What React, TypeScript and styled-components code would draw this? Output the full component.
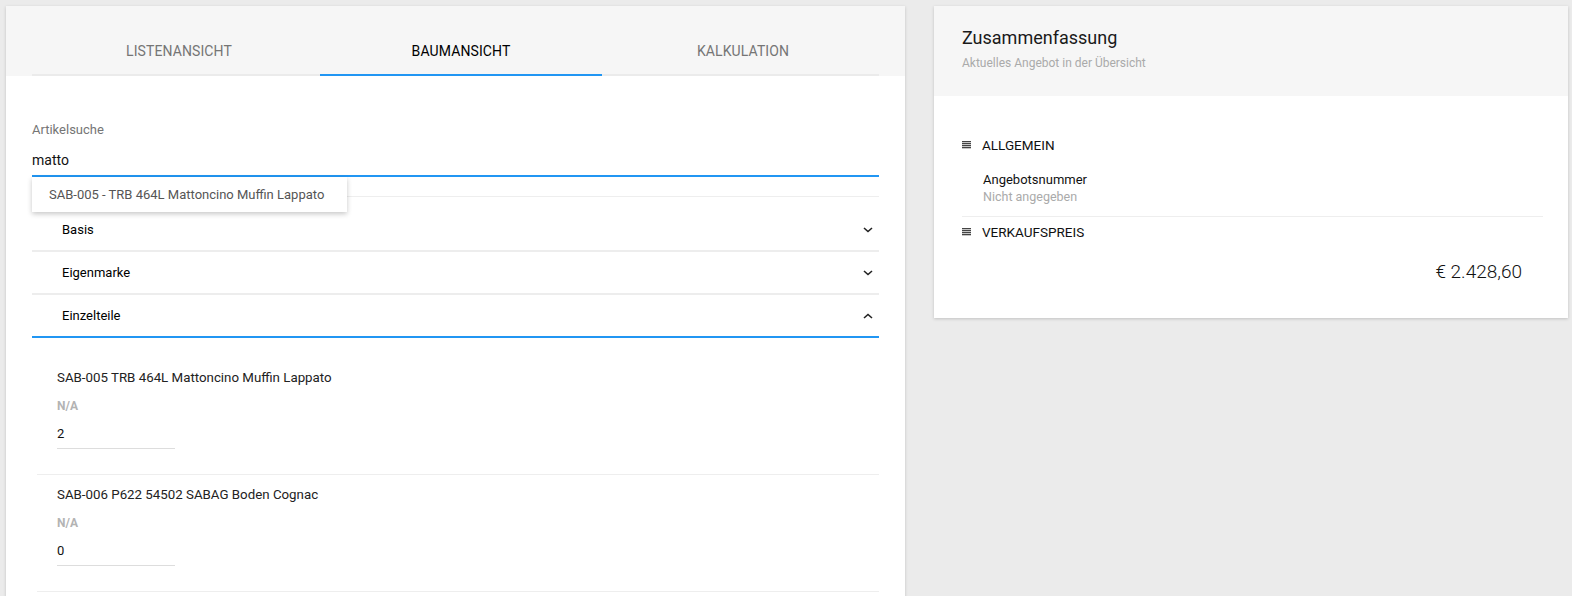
import React from 'react';
import styled, { createGlobalStyle } from 'styled-components';

const GlobalStyle = createGlobalStyle`
  html, body {
    margin: 0;
    padding: 0;
    background: #ebebeb;
    font-family: Roboto, "Noto Sans", "Liberation Sans", sans-serif;
    color: #212121;
    overflow: hidden;
  }
`;

const Page = styled.div`
  display: flex;
  align-items: flex-start;
  gap: 29px;
  padding: 6px 4px 0 6px;
  height: 590px;
`;

const Card = styled.div`
  background: #fff;
  box-shadow: 0 1px 3px rgba(0, 0, 0, 0.18);
`;

const LeftCard = styled(Card)`
  width: 899px;
  min-height: 640px;
`;

const RightCard = styled(Card)`
  flex: 1;
`;

const TabHeader = styled.div`
  background: #f6f6f6;
  padding: 22px 26px 0;
`;

const TabBar = styled.div`
  display: flex;
  padding-left: 6px;
  border-bottom: 2px solid #ebebeb;
  height: 46px;
`;

const Tab = styled.div<{ $active?: boolean }>`
  width: 282px;
  flex: none;
  display: flex;
  align-items: center;
  justify-content: center;
  font-size: 14px;
  font-weight: 400;
  letter-spacing: 0.1px;
  color: ${(p) => (p.$active ? '#000' : '#757575')};
  position: relative;

  &::after {
    content: '';
    display: ${(p) => (p.$active ? 'block' : 'none')};
    position: absolute;
    left: 0;
    right: 0;
    bottom: -2px;
    height: 2px;
    background: #2196f3;
  }
`;

const Body = styled.div`
  padding: 46px 26px 0;
`;

const SearchField = styled.div`
  position: relative;
`;

const FieldLabel = styled.div`
  font-size: 13px;
  color: #757575;
  line-height: 16px;
`;

const SearchInput = styled.div`
  font-size: 14px;
  color: #111;
  line-height: 20px;
  padding: 12px 0 5px;
  border-bottom: 2px solid #2196f3;
`;

const Suggestions = styled.div`
  position: absolute;
  top: 100%;
  left: 0;
  width: 315px;
  background: #fff;
  box-shadow: 0 2px 5px rgba(0, 0, 0, 0.22);
  z-index: 2;
`;

const Suggestion = styled.div`
  font-size: 13px;
  color: #555;
  line-height: 35px;
  padding-left: 17px;
`;

const Accordion = styled.div`
  margin-top: 19px;
  border-top: 1px solid #eee;
  padding-top: 12px;
`;

const Row = styled.div<{ $open?: boolean }>`
  height: 41px;
  display: flex;
  align-items: center;
  justify-content: space-between;
  padding: 0 6px 0 30px;
  border-bottom: 2px solid ${(p) => (p.$open ? '#2196f3' : '#ededed')};
  font-size: 13px;
  font-weight: 400;
  color: #000;
`;

const Panel = styled.div`
  padding-top: 20px;
`;

const Item = styled.div`
  margin-left: 5px;
  padding: 10px 0 25px 20px;
  border-bottom: 1px solid #eee;
`;

const ItemTitle = styled.div`
  font-size: 13.3px;
  line-height: 20px;
  color: #222;
`;

const ItemSub = styled.div`
  margin-top: 8px;
  font-size: 12px;
  font-weight: 700;
  line-height: 20px;
  color: #b3b3b3;
`;

const QtyInput = styled.div`
  margin-top: 8px;
  width: 118px;
  height: 24px;
  border-bottom: 1px solid #ddd;
  font-size: 13px;
  line-height: 20px;
  color: #111;
`;

const SummaryHeader = styled.div`
  background: #f6f6f6;
  height: 90px;
  padding: 20px 28px 0;
  box-sizing: border-box;
`;

const SummaryTitle = styled.div`
  font-size: 18px;
  line-height: 24px;
  color: #1a1a1a;
`;

const SummarySub = styled.div`
  margin-top: 5px;
  font-size: 12px;
  line-height: 16px;
  color: #aaa;
`;

const SummaryBody = styled.div`
  padding: 39px 25px 34px 28px;
`;

const Section = styled.div<{ $divider?: boolean }>`
  padding-bottom: ${(p) => (p.$divider ? '11px' : '0')};
  border-bottom: ${(p) => (p.$divider ? '1px solid #eee' : 'none')};
  margin-bottom: ${(p) => (p.$divider ? '5px' : '0')};
`;

const SectionHead = styled.div`
  display: flex;
  align-items: center;
  gap: 11px;
  font-size: 13.5px;
  line-height: 20px;
  color: #111;
`;

const Entry = styled.div`
  padding: 16px 0 0 21px;
`;

const EntryLabel = styled.div`
  font-size: 13px;
  line-height: 17px;
  color: #111;
`;

const EntryValue = styled.div`
  font-size: 12.5px;
  line-height: 17px;
  color: #aaa;
`;

const Price = styled.div`
  margin-top: 18px;
  padding-right: 21px;
  text-align: right;
  font-size: 19px;
  font-weight: 300;
  line-height: 24px;
  color: #111;
`;

const Chevron = ({ up }: { up?: boolean }) => (
  <svg width="10" height="6" viewBox="0 0 10 6">
    <polyline
      points={up ? '1,5 5,1.5 9,5' : '1,1 5,4.5 9,1'}
      fill="none"
      stroke="#222"
      strokeWidth="1.6"
    />
  </svg>
);

const ListIcon = () => (
  <svg width="9" height="8" viewBox="0 0 9 8">
    {[0, 2, 4, 6].map((y) => (
      <rect key={y} x="0" y={y} width="9" height="1.3" fill="#444" />
    ))}
  </svg>
);

const parts = [
  { title: 'SAB-005 TRB 464L Mattoncino Muffin Lappato', qty: '2' },
  { title: 'SAB-006 P622 54502 SABAG Boden Cognac', qty: '0' },
];

export default function App() {
  return (
    <>
      <GlobalStyle />
      <Page>
        <LeftCard>
          <TabHeader>
            <TabBar>
              <Tab>LISTENANSICHT</Tab>
              <Tab $active>BAUMANSICHT</Tab>
              <Tab>KALKULATION</Tab>
            </TabBar>
          </TabHeader>
          <Body>
            <SearchField>
              <FieldLabel>Artikelsuche</FieldLabel>
              <SearchInput>matto</SearchInput>
              <Suggestions>
                <Suggestion>SAB-005 - TRB 464L Mattoncino Muffin Lappato</Suggestion>
              </Suggestions>
            </SearchField>
            <Accordion>
              <Row>
                Basis
                <Chevron />
              </Row>
              <Row>
                Eigenmarke
                <Chevron />
              </Row>
              <Row $open>
                Einzelteile
                <Chevron up />
              </Row>
              <Panel>
                {parts.map((p) => (
                  <Item key={p.title}>
                    <ItemTitle>{p.title}</ItemTitle>
                    <ItemSub>N/A</ItemSub>
                    <QtyInput>{p.qty}</QtyInput>
                  </Item>
                ))}
              </Panel>
            </Accordion>
          </Body>
        </LeftCard>
        <RightCard>
          <SummaryHeader>
            <SummaryTitle>Zusammenfassung</SummaryTitle>
            <SummarySub>Aktuelles Angebot in der Übersicht</SummarySub>
          </SummaryHeader>
          <SummaryBody>
            <Section $divider>
              <SectionHead>
                <ListIcon />
                ALLGEMEIN
              </SectionHead>
              <Entry>
                <EntryLabel>Angebotsnummer</EntryLabel>
                <EntryValue>Nicht angegeben</EntryValue>
              </Entry>
            </Section>
            <Section>
              <SectionHead>
                <ListIcon />
                VERKAUFSPREIS
              </SectionHead>
              <Price>€ 2.428,60</Price>
            </Section>
          </SummaryBody>
        </RightCard>
      </Page>
    </>
  );
}
